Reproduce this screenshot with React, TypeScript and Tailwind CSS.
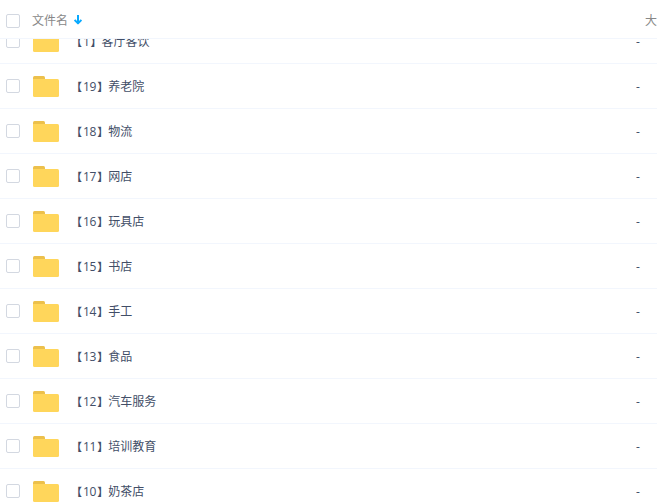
import React from 'react';

interface Folder {
  index: number;
  name: string;
}

const folders: Folder[] = [
  { index: 1, name: '客厅客饮' },
  { index: 19, name: '养老院' },
  { index: 18, name: '物流' },
  { index: 17, name: '网店' },
  { index: 16, name: '玩具店' },
  { index: 15, name: '书店' },
  { index: 14, name: '手工' },
  { index: 13, name: '食品' },
  { index: 12, name: '汽车服务' },
  { index: 11, name: '培训教育' },
  { index: 10, name: '奶茶店' },
];

const Checkbox = () => (
  <span
    role="checkbox"
    aria-checked="false"
    className="block w-3.5 h-3.5 shrink-0 rounded-[2px] border border-[#d3d8e1] bg-white"
  />
);

const FolderIcon = () => (
  <svg width="26" height="21" viewBox="0 0 26 21" className="block shrink-0">
    <path d="M0 5V1.5Q0 0 1.5 0H10.5Q12 0 12 1.5V5Z" fill="#ecc04c" />
    <path d="M0 3H24.5Q26 3 26 4.5V19.5Q26 21 24.5 21H1.5Q0 21 0 19.5Z" fill="#ffd65b" />
  </svg>
);

const SortArrow = () => (
  <svg width="8" height="10" viewBox="0 0 8 10" className="block shrink-0" fill="none" stroke="#09aaff" strokeWidth="2">
    <path d="M4 0V8.5" />
    <path d="M0.6 5L4 8.4L7.4 5" strokeLinejoin="round" />
  </svg>
);

const FileRow: React.FC<{ folder: Folder }> = ({ folder }) => (
  <div className="flex items-center h-[45px] shrink-0 pl-1.5 border-b border-[#f2f6fd]">
    <Checkbox />
    <div className="ml-[13px] pt-px">
      <FolderIcon />
    </div>
    <div className="ml-3 pt-px flex-1 text-[#424e67] whitespace-nowrap">
      <span className="text-[11px] font-bold mr-px">【</span>
      <span className="tracking-[-0.3px]">{folder.index}</span>
      <span className="text-[11px] font-bold ml-px">】</span>
      {folder.name}
    </div>
    <div className="w-[21px] pt-px text-[#424e67]">-</div>
  </div>
);

export default function App() {
  return (
    <div className="flex flex-col w-full h-[502px] overflow-hidden bg-white text-xs font-['Open_Sans','Noto_Sans_CJK_SC',sans-serif]">
      {/* Column headers */}
      <div className="flex items-center h-[39px] shrink-0 pl-1.5 pt-[3px] border-b border-[#f2f6fd] text-[#888888] whitespace-nowrap overflow-hidden">
        <Checkbox />
        <span className="ml-3">文件名</span>
        <span className="ml-1.5 -mt-0.5">
          <SortArrow />
        </span>
        <div className="flex-1" />
        <span className="w-3 shrink-0">大小</span>
      </div>

      {/* List, scrolled slightly under the header */}
      <div className="flex-1 overflow-hidden">
        <div className="flex flex-col -mt-5">
          {folders.map((folder) => (
            <FileRow key={folder.index} folder={folder} />
          ))}
        </div>
      </div>
    </div>
  );
}
